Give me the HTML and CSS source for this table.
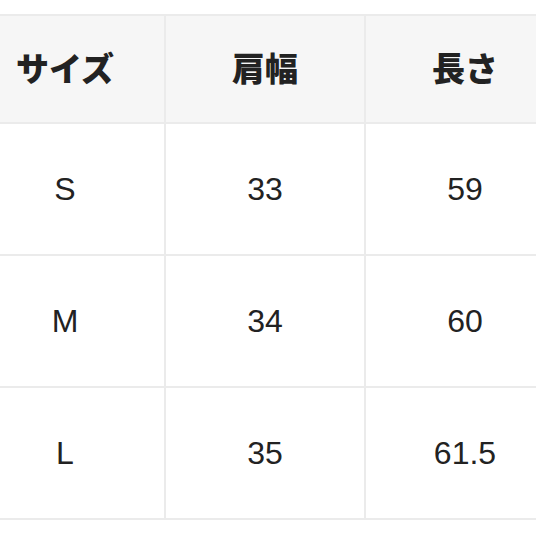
FILE: index.html
```html
<!DOCTYPE html>
<html lang="ja">
<head>
<meta charset="utf-8">
<link rel="stylesheet" href="styles.css">
</head>
<body>
<table class="size-table">
  <colgroup>
    <col class="col">
    <col class="col">
    <col class="col">
  </colgroup>
  <thead>
    <tr class="head-row">
      <th>サイズ</th>
      <th>肩幅</th>
      <th>長さ</th>
    </tr>
  </thead>
  <tbody>
    <tr class="data-row"><td>S</td><td>33</td><td>59</td></tr>
    <tr class="data-row"><td>M</td><td>34</td><td>60</td></tr>
    <tr class="data-row"><td>L</td><td>35</td><td>61.5</td></tr>
  </tbody>
</table>
</body>
</html>
```
FILE: styles.css
```css
html, body {
  margin: 0;
  padding: 0;
  background: #ffffff;
  overflow: hidden;
}
.size-table {
  margin-top: 14px;
  margin-left: -36px;
  width: 600px;
  border-collapse: collapse;
  table-layout: fixed;
  font-family: "Liberation Sans", "Noto Sans CJK JP", sans-serif;
  color: #222222;
}
.col {
  width: 200px;
}
.size-table th,
.size-table td {
  border: 2px solid #ebebeb;
  text-align: center;
  vertical-align: middle;
  padding: 0;
}
.head-row th {
  height: 101px;
  padding-bottom: 5px;
  background: #f6f6f6;
  font-size: 33px;
  font-weight: 900;
  font-family: "Noto Sans CJK JP", sans-serif;
}
.data-row td {
  height: 130px;
  font-size: 32px;
  font-weight: normal;
}
```
